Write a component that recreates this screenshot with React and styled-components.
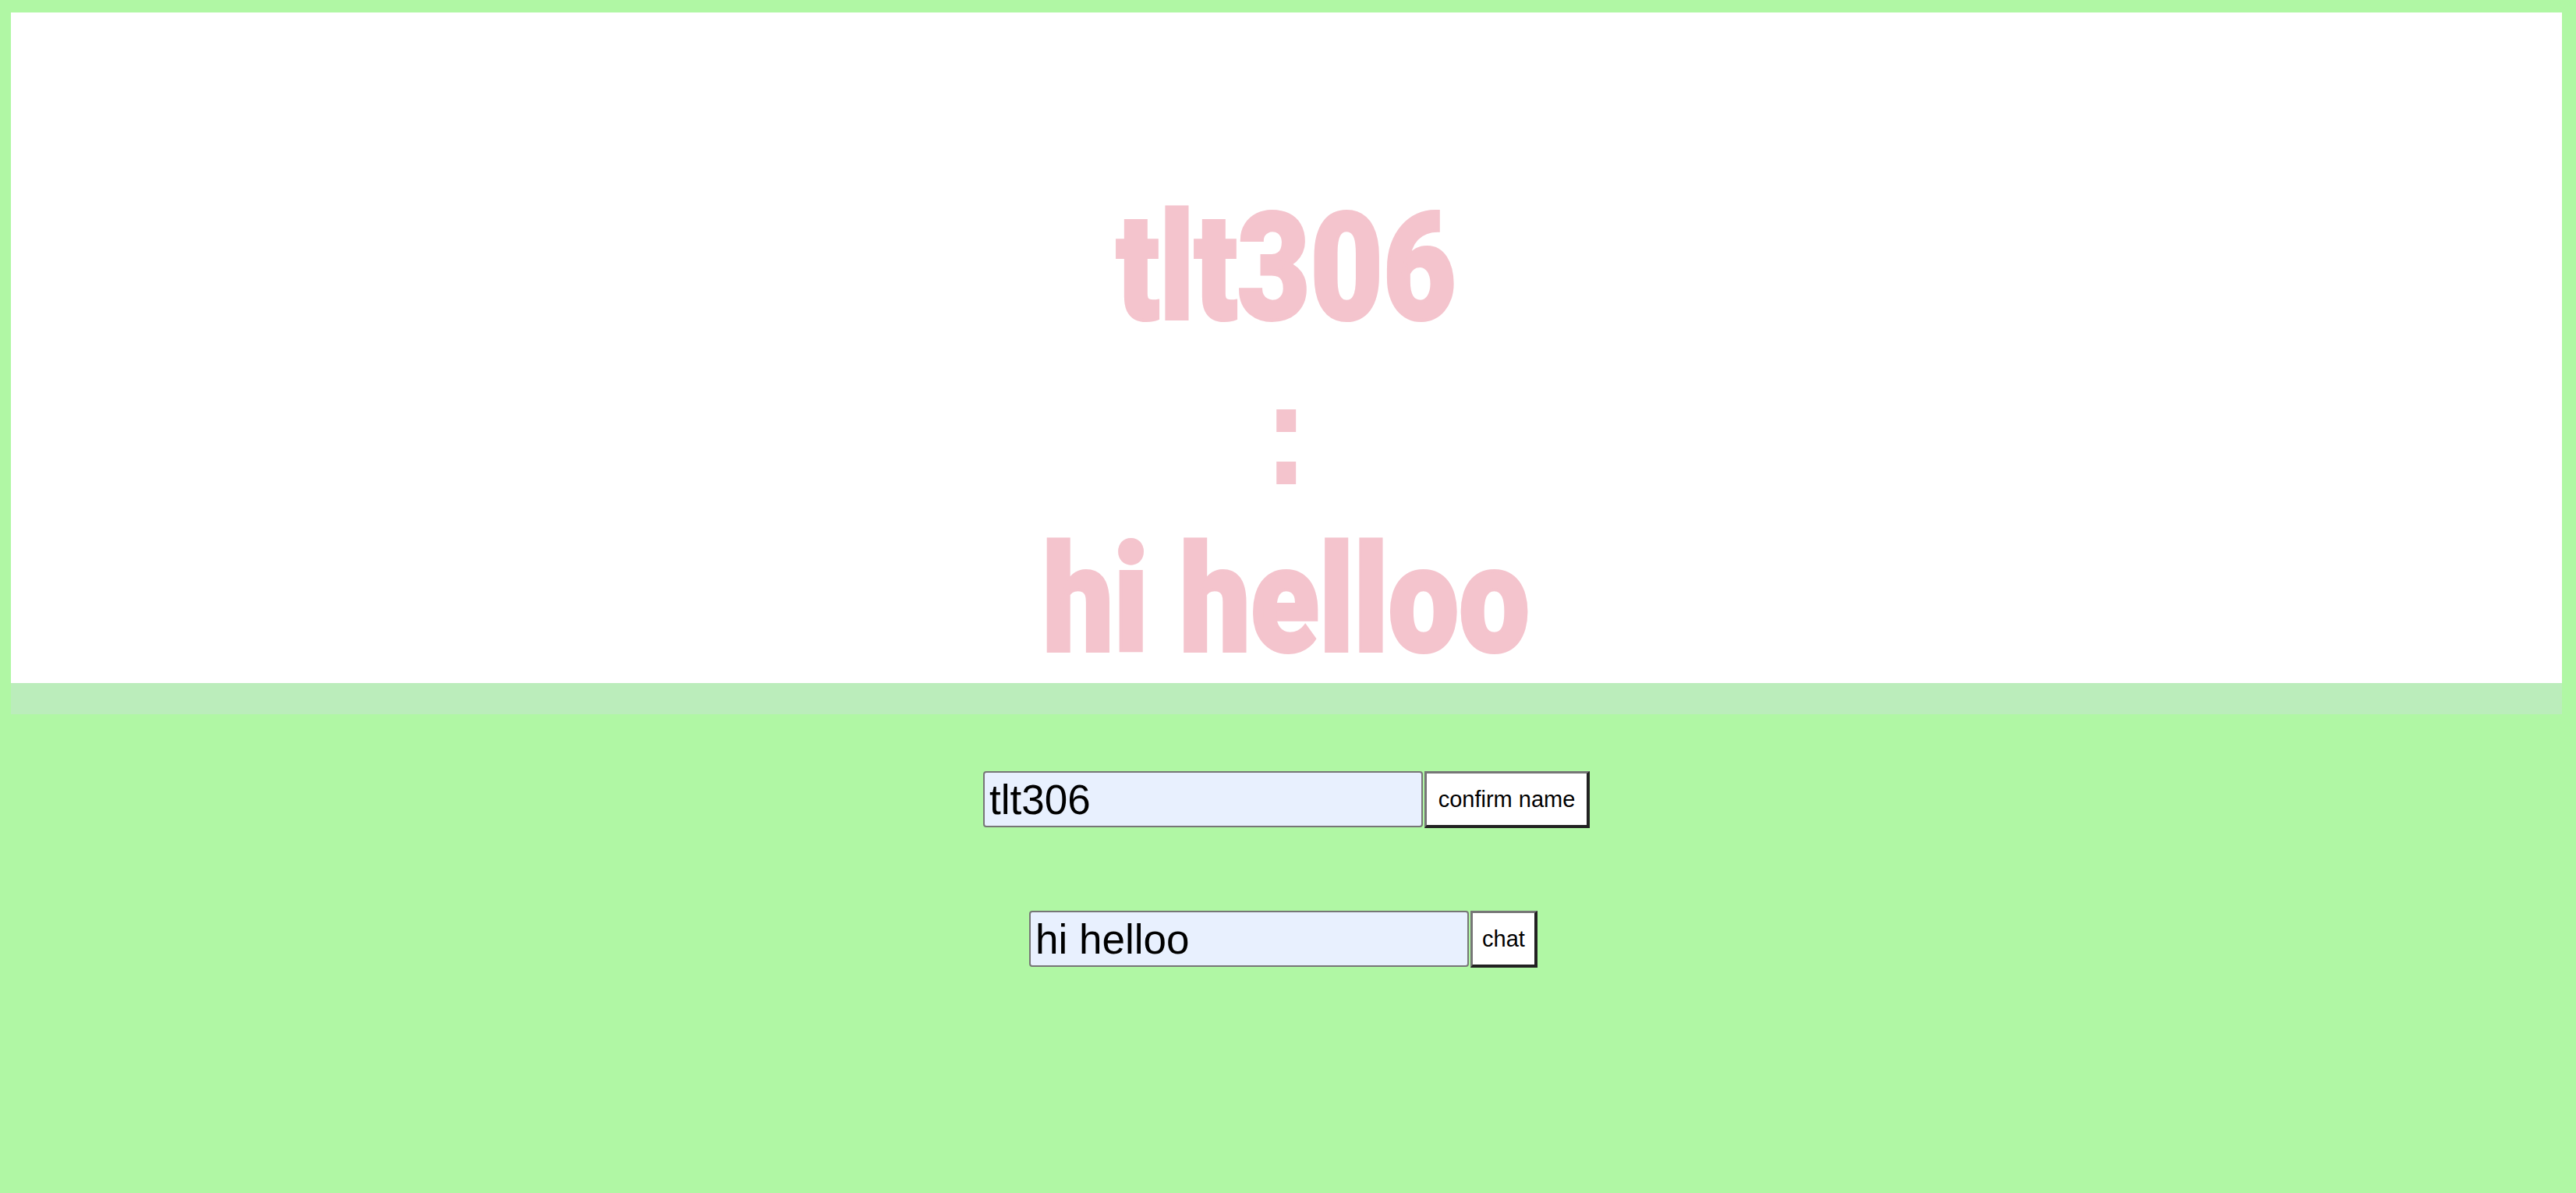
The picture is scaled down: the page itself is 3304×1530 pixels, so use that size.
import React from 'react';
import styled, { createGlobalStyle } from 'styled-components';

const GlobalStyle = createGlobalStyle`
  html, body {
    margin: 0;
    padding: 0;
    background: #b0f7a4;
  }
  body {
    font-family: 'Liberation Sans', Arial, sans-serif;
  }
`;

const Page = styled.div`
  min-height: 1530px;
  padding: 16px 18px 0 14px;
  box-sizing: border-box;
`;

const ChatPanel = styled.div`
  height: 900px;
  display: flex;
  flex-direction: column;
  background: #bbedbb;
`;

const ChatLog = styled.div`
  height: 860px;
  background: #ffffff;
  display: flex;
  flex-direction: column;
  align-items: center;
  padding-top: 221px;
  box-sizing: border-box;
`;

const Messages = styled.div`
  font-family: Impact, Roboto, Lato, sans-serif;
  font-weight: 900;
  font-size: 192px;
  line-height: 213px;
  color: #f4c4cd;
  -webkit-text-stroke: 4px #f4c4cd;
  text-align: center;
  transform: scaleX(0.84);
  transform-origin: center top;
  white-space: nowrap;
`;

const Line = styled.div`
  font-family: ${(p) => (p.$sep ? "'Liberation Sans', Arial, sans-serif" : 'inherit')};
  font-size: ${(p) => (p.$sep ? '182px' : 'inherit')};
  font-weight: ${(p) => (p.$sep ? 700 : 900)};
`;

const Controls = styled.div`
  display: flex;
  flex-direction: column;
  align-items: center;
  padding-top: 73px;
  gap: 106px;
`;

const Row = styled.div`
  display: flex;
  align-items: stretch;
  gap: 2px;
  margin-right: ${(p) => p.$shift || 0}px;
`;

const TextField = styled.input`
  width: 564px;
  height: 72px;
  box-sizing: border-box;
  padding: 0 6px;
  border: 2px solid #767676;
  border-radius: 4px;
  background: #e8f0fe;
  color: #000;
  font-family: 'Liberation Sans', Arial, sans-serif;
  font-size: 53px;
  outline: none;
`;

const Button = styled.button`
  width: ${(p) => p.$w}px;
  height: 73px;
  box-sizing: border-box;
  padding: 0;
  background: #ffffff;
  color: #000;
  border-style: solid;
  border-width: 3px 4px 4px 3px;
  border-color: #767676 #222222 #222222 #767676;
  font-family: 'Liberation Sans', Arial, sans-serif;
  font-size: 29px;
  cursor: pointer;
`;

class App extends React.Component {
  constructor(props) {
    super(props);
    this.state = {
      name: 'tlt306',
      message: 'hi helloo',
    };
  }

  render() {
    const { name, message } = this.state;
    return (
      <Page>
        <GlobalStyle />
        <ChatPanel>
          <ChatLog>
            <Messages>
              <Line>tlt306</Line>
              <Line $sep>:</Line>
              <Line>hi helloo</Line>
            </Messages>
          </ChatLog>
        </ChatPanel>
        <Controls>
          <Row>
            <TextField
              value={name}
              onChange={(e) => this.setState({ name: e.target.value })}
            />
            <Button $w={212}>confirm name</Button>
          </Row>
          <Row $shift={8}>
            <TextField
              value={message}
              onChange={(e) => this.setState({ message: e.target.value })}
            />
            <Button $w={86}>chat</Button>
          </Row>
        </Controls>
      </Page>
    );
  }
}

export default App;
